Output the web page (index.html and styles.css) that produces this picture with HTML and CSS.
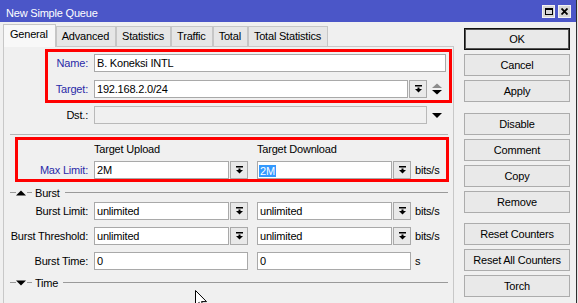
FILE: index.html
```html
<!DOCTYPE html>
<html>
<head>
<meta charset="utf-8">
<title>New Simple Queue</title>
<link rel="stylesheet" href="styles.css">
</head>
<body>
<div class="window">
  <div class="titlebar">
    <span class="title">New Simple Queue</span>
    <div class="tbtns">
      <span class="tbtn"><svg width="8" height="7" viewBox="0 0 8 7"><path d="M0 0H8V7H0Z M1 2V6H7V2Z" fill="#000" fill-rule="evenodd"/></svg></span>
      <span class="tbtn"><svg width="7" height="7" viewBox="0 0 7 7"><path d="M0.5 0.5L6.5 6.5M6.5 0.5L0.5 6.5" stroke="#000" stroke-width="1.8"/></svg></span>
    </div>
  </div>
  <div class="main">
    <div class="left">
      <div class="tabs">
        <div class="tab sel">General</div>
        <div class="tab">Advanced</div>
        <div class="tab">Statistics</div>
        <div class="tab">Traffic</div>
        <div class="tab">Total</div>
        <div class="tab">Total Statistics</div>
      </div>
      <div class="panel">
        <div class="hl hl1">
          <div class="row">
            <span class="lbl blue">Name:</span>
            <div class="field w-name">B. Koneksi INTL</div>
          </div>
          <div class="row gap8">
            <span class="lbl blue">Target:</span>
            <div class="field w-target">192.168.2.0/24</div>
            <div class="dd"><svg width="7" height="8" viewBox="0 0 7 8"><rect x="0" y="0" width="7" height="1.5"/><rect x="2.5" y="2.5" width="2" height="1.5"/><path d="M0 4H7L3.5 7.5Z"/></svg></div>
            <svg class="spin" width="10" height="12" viewBox="0 0 10 12"><path d="M0 5H10L5 0.5Z" fill="#8c8c8c"/><path d="M0 7H10L5 11.5Z" fill="#000"/></svg>
          </div>
        </div>
        <div class="row gap8">
          <span class="lbl">Dst.:</span>
          <div class="field w-dst disabled"></div>
          <svg class="dstarrow" width="10" height="5" viewBox="0 0 10 5"><path d="M0 0H10L5 5Z" fill="#000"/></svg>
        </div>
        <div class="sep"></div>
        <div class="hl hl2">
          <div class="colhead">
            <span class="sp"></span>
            <span class="ch">Target Upload</span>
            <span class="ch">Target Download</span>
          </div>
          <div class="row gap5">
            <span class="lbl blue">Max Limit:</span>
            <div class="field w-half">2M</div>
            <div class="dd"><svg width="7" height="8" viewBox="0 0 7 8"><rect x="0" y="0" width="7" height="1.5"/><rect x="2.5" y="2.5" width="2" height="1.5"/><path d="M0 4H7L3.5 7.5Z"/></svg></div>
            <div class="field w-half col2"><span class="seltext">2M</span></div>
            <div class="dd"><svg width="7" height="8" viewBox="0 0 7 8"><rect x="0" y="0" width="7" height="1.5"/><rect x="2.5" y="2.5" width="2" height="1.5"/><path d="M0 4H7L3.5 7.5Z"/></svg></div>
            <span class="unit">bits/s</span>
          </div>
        </div>
        <div class="section s-burst">
          <span class="seg"></span>
          <svg class="tri" width="10" height="6" viewBox="0 0 10 6"><path d="M0 5.5H10L5 0.5Z" fill="#000"/></svg>
          <span class="seg seg2"></span>
          <span class="sec-title">Burst</span>
          <span class="line"></span>
        </div>
        <div class="row gap4">
          <span class="lbl">Burst Limit:</span>
          <div class="field w-half">unlimited</div>
          <div class="dd"><svg width="7" height="8" viewBox="0 0 7 8"><rect x="0" y="0" width="7" height="1.5"/><rect x="2.5" y="2.5" width="2" height="1.5"/><path d="M0 4H7L3.5 7.5Z"/></svg></div>
          <div class="field w-half col2">unlimited</div>
          <div class="dd"><svg width="7" height="8" viewBox="0 0 7 8"><rect x="0" y="0" width="7" height="1.5"/><rect x="2.5" y="2.5" width="2" height="1.5"/><path d="M0 4H7L3.5 7.5Z"/></svg></div>
          <span class="unit">bits/s</span>
        </div>
        <div class="row gap7">
          <span class="lbl">Burst Threshold:</span>
          <div class="field w-half">unlimited</div>
          <div class="dd"><svg width="7" height="8" viewBox="0 0 7 8"><rect x="0" y="0" width="7" height="1.5"/><rect x="2.5" y="2.5" width="2" height="1.5"/><path d="M0 4H7L3.5 7.5Z"/></svg></div>
          <div class="field w-half col2">unlimited</div>
          <div class="dd"><svg width="7" height="8" viewBox="0 0 7 8"><rect x="0" y="0" width="7" height="1.5"/><rect x="2.5" y="2.5" width="2" height="1.5"/><path d="M0 4H7L3.5 7.5Z"/></svg></div>
          <span class="unit">bits/s</span>
        </div>
        <div class="row gap7">
          <span class="lbl">Burst Time:</span>
          <div class="field w-time">0</div>
          <div class="field w-time col2">0</div>
          <span class="unit">s</span>
        </div>
        <div class="section s-time">
          <span class="seg"></span>
          <svg class="tri" width="10" height="6" viewBox="0 0 10 6"><path d="M0 0.5H10L5 5.5Z" fill="#000"/></svg>
          <span class="seg seg2"></span>
          <span class="sec-title">Time</span>
          <span class="line"></span>
        </div>
      </div>
    </div>
    <div class="side">
      <div class="btn default">OK</div>
      <div class="btn">Cancel</div>
      <div class="btn">Apply</div>
      <div class="btn grp">Disable</div>
      <div class="btn">Comment</div>
      <div class="btn">Copy</div>
      <div class="btn">Remove</div>
      <div class="btn grp2">Reset Counters</div>
      <div class="btn">Reset All Counters</div>
      <div class="btn">Torch</div>
    </div>
  </div>
  <svg class="cursor" width="12" height="19" viewBox="0 0 12 19"><path d="M0.5 0.5V16L4.2 12.4L6.8 18.2L9 17.2L6.5 11.6H11.5Z" fill="#fff" stroke="#000" stroke-width="1"/></svg>
</div>
</body>
</html>
```

FILE: styles.css
```css
* { box-sizing: border-box; }
html { background: #e6e6e6; }
body {
  margin: 0;
  font-family: "Liberation Sans", Arial, sans-serif;
  font-size: 11px;
  letter-spacing: -0.2px;
  color: #000;
}
.window {
  position: relative;
  width: 577px;
  height: 303px;
  background: #f0f0f0;
  border-right: 1px solid #2e2e2e;
  overflow: hidden;
}
.titlebar {
  height: 22px;
  background: #4b56c8;
  display: flex;
  align-items: flex-start;
  justify-content: space-between;
  padding: 0 5px 0 6px;
}
.title {
  color: #fff;
  line-height: 14px;
  margin-top: 6px;
}
.tbtns {
  display: flex;
  gap: 3px;
  margin-top: 5px;
}
.tbtn {
  width: 13px;
  height: 13px;
  background: #d6d6d6;
  border: 1px solid #f2f2f2;
  display: flex;
  align-items: center;
  justify-content: center;
}
.main {
  display: flex;
  align-items: flex-start;
}
.left {
  width: 451px;
  margin-left: 3px;
  margin-top: 2px;
}
.tabs {
  display: flex;
  align-items: flex-end;
  height: 22px;
}
.tab {
  height: 20px;
  line-height: 19px;
  padding: 0 6px 0 5px;
  border: 1px solid #c6c6c6;
  border-bottom: 0;
  background: #e6e6e6;
  white-space: nowrap;
}
.tab.sel {
  height: 23px;
  margin-bottom: -1px;
  background: #f8f8f8;
  position: relative;
  z-index: 1;
  padding: 0 7px 0 6px;
}
.panel {
  height: 262px;
  border: 1px solid #c8c8c8;
  background: #f0f0f0;
  padding-top: 7px;
}
.row {
  display: flex;
  align-items: center;
  height: 18px;
}
.gap8 { margin-top: 8px; }
.gap7 { margin-top: 7px; }
.gap5 { margin-top: 5px; }
.gap4 { margin-top: 4px; }
.lbl {
  flex: none;
  width: 84px;
  margin-right: 6px;
  text-align: right;
  white-space: nowrap;
}
.blue { color: #2a2aa8; }
.field {
  flex: none;
  height: 18px;
  background: #fff;
  border: 1px solid #a9a9a9;
  padding-left: 2px;
  line-height: 16px;
  white-space: nowrap;
  overflow: hidden;
}
.field.disabled {
  background: #f0f0f0;
  border-color: #b9b9b9;
}
.w-name { width: 352px; }
.w-target { width: 314px; }
.w-dst { width: 333px; }
.w-half { width: 135px; }
.w-time { width: 154px; }
.col2 { margin-left: 9px; }
.dd {
  flex: none;
  width: 18px;
  height: 18px;
  margin-left: 1px;
  border: 1px solid #a9a9a9;
  background: #e9e9e9;
  display: flex;
  align-items: center;
  justify-content: center;
}
.spin { margin-left: 5px; flex: none; }
.dstarrow { margin-left: 5px; flex: none; }
.unit { margin-left: 4px; }
.seltext {
  display: inline-block;
  background: #3399ff;
  color: #fff;
  line-height: 12px;
  padding: 0 1px;
  margin-left: -1px;
  vertical-align: -1px;
}
.sep {
  margin: 10px 5px 0 6px;
  height: 1px;
  background: #b4b4b4;
}
.hl { position: relative; }
.hl::after {
  content: "";
  position: absolute;
  border: 3px solid #ff0000;
  pointer-events: none;
}
.hl1::after { top: -5px; bottom: -5px; left: 41px; right: 1px; }
.hl2 { margin-top: 7px; }
.hl2::after { top: -5px; bottom: -3px; left: 11px; right: 4px; }
.colhead {
  display: flex;
  align-items: center;
  height: 14px;
}
.colhead .sp { width: 90px; flex: none; }
.colhead .ch { width: 163px; flex: none; }
.section {
  display: flex;
  align-items: center;
  height: 11px;
  margin: 0 5px 0 6px;
}
.s-burst { margin-top: 8px; }
.s-time { margin-top: 7px; }
.seg {
  flex: none;
  width: 6px;
  height: 1px;
  background: #9a9a9a;
}
.seg2 { width: 5px; margin-left: 1px; }
.tri { flex: none; }
.sec-title { margin: 0 5px 0 3px; }
.line {
  flex: 1;
  height: 1px;
  background: #9a9a9a;
}
.side {
  width: 106px;
  margin-left: 10px;
  margin-top: 6px;
  display: flex;
  flex-direction: column;
  gap: 4px;
}
.btn {
  height: 22px;
  display: flex;
  align-items: center;
  justify-content: center;
  background: #e9e9e9;
  border: 1px solid #acacac;
  white-space: nowrap;
}
.btn.default {
  border-color: #111;
  box-shadow: inset 0 0 0 1px #555;
}
.grp { margin-top: 7px; }
.grp2 { margin-top: 6px; }
.cursor {
  position: absolute;
  left: 195px;
  top: 290px;
}
```
